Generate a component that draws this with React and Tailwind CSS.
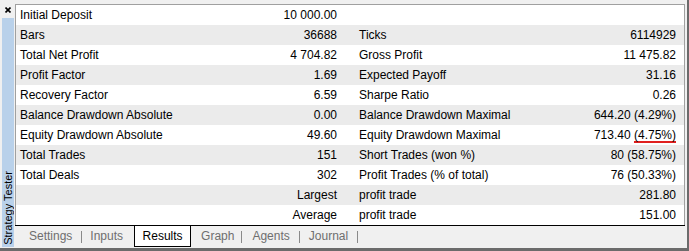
import React from 'react';

const rows = [
  ['Initial Deposit', '10 000.00', '', ''],
  ['Bars', '36688', 'Ticks', '6114929'],
  ['Total Net Profit', '4 704.82', 'Gross Profit', '11 475.82'],
  ['Profit Factor', '1.69', 'Expected Payoff', '31.16'],
  ['Recovery Factor', '6.59', 'Sharpe Ratio', '0.26'],
  ['Balance Drawdown Absolute', '0.00', 'Balance Drawdown Maximal', '644.20 (4.29%)'],
  ['Equity Drawdown Absolute', '49.60', 'Equity Drawdown Maximal', 'hover'],
  ['Total Trades', '151', 'Short Trades (won %)', '80 (58.75%)'],
  ['Total Deals', '302', 'Profit Trades (% of total)', '76 (50.33%)'],
  ['', 'Largest', 'profit trade', '281.80'],
  ['', 'Average', 'profit trade', '151.00'],
];

const Sep = ({ className = '' }) => (
  <div className={`w-px h-[12px] mt-[5px] bg-[#8a8a8a] ${className}`} />
);

const App = () => {
  return (
    <div
      className="w-[689px] h-[251px] bg-[#f0f0f0] flex border-r-2 border-b-[3px] border-[#6b6b6b] text-[12px] text-black"
      style={{ fontFamily: '"Liberation Sans", Arial, sans-serif' }}
    >
      {/* side strip */}
      <div className="w-[15px] flex flex-col">
        <div className="h-[18px] pl-[5px] pt-[7px]">
          <svg width="6" height="6" viewBox="0 0 6 6">
            <path d="M0.5 0.5L5.5 5.5M5.5 0.5L0.5 5.5" stroke="#000" strokeWidth="1.6" />
          </svg>
        </div>
        <div className="ml-[2px] w-[12px] flex-1 mb-[1px] bg-[#b9d1ea] flex flex-col justify-end items-center pb-[2px]">
          <span className="[writing-mode:vertical-rl] rotate-180 text-[11px] leading-[12px] whitespace-nowrap">
            Strategy Tester
          </span>
        </div>
      </div>

      {/* main */}
      <div className="flex-1 flex flex-col pt-[4px] pr-[2px]">
        <div className="border-t border-x border-[#a0a0a0] bg-white">
          {rows.map((r, i) => (
            <div key={i} className={`flex h-[20px] leading-[20px] ${i % 2 ? 'bg-[#ebebeb]' : 'bg-white'}`}>
              <div className="w-[324px] flex justify-between pl-[4px] pr-[3px]">
                <span>{r[0]}</span>
                <span>{r[1]}</span>
              </div>
              <div className="flex-1 flex justify-between pl-[19px] pr-[8px]">
                <span>{r[2]}</span>
                {r[3] === 'hover' ? (
                  <span>
                    713.40{' '}
                    <span className="underline decoration-[#e0201f] decoration-2 underline-offset-[2px]">(4.75%)</span>
                  </span>
                ) : (
                  <span>{r[3]}</span>
                )}
              </div>
            </div>
          ))}
        </div>

        {/* tabs */}
        <div className="border-t border-black h-[23px] flex items-start pl-[14px] leading-[20px] text-[#6e6e6e]">
          <span>Settings</span>
          <Sep className="ml-[9px] mr-[8px]" />
          <span>Inputs</span>
          <div className="ml-[11px] w-[57px] h-[21px] bg-white border-x border-b border-black text-black text-center">
            Results
          </div>
          <span className="ml-[10px]">Graph</span>
          <Sep className="ml-[7px] mr-[10px]" />
          <span>Agents</span>
          <Sep className="ml-[9px] mr-[9px]" />
          <span>Journal</span>
          <Sep className="ml-[9px]" />
        </div>
      </div>
    </div>
  );
};

export default App;
